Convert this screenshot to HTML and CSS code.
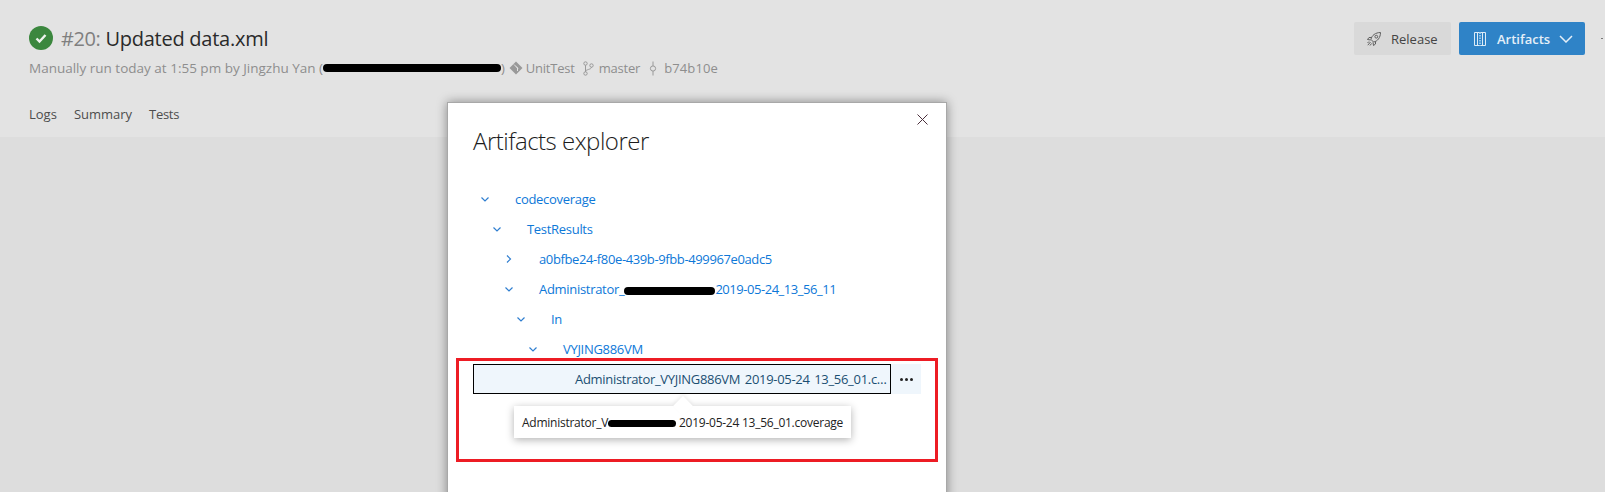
FILE: index.html
```html
<!DOCTYPE html>
<html lang="en">
<head>
<meta charset="utf-8">
<title>Artifacts explorer</title>
<link rel="stylesheet" href="styles.css">
</head>
<body>
<div class="page">
  <header class="top">
    <div class="head">
      <div class="summary">
        <div class="title-line">
          <svg class="status" viewBox="0 0 24 24" width="24" height="24"><circle cx="12" cy="12" r="12" fill="#3b873e"/><path d="M7.5 12.5l3 3 6-6.5" fill="none" stroke="#eef3ee" stroke-width="2.4"/></svg>
          <h1 class="title"><span class="run-no">#20:</span> Updated data.xml</h1>
        </div>
        <div class="meta">
          <span class="meta-by">Manually run today at 1:55 pm by Jingzhu Yan (</span><span class="redact redact-meta"></span><span class="meta-close">)</span>
          <svg class="meta-icon icon-git" viewBox="0 0 14 14" width="14" height="14"><path d="M7 .5L13.5 7 7 13.5.5 7z" fill="#999"/><path d="M5 3.5l3.5 3.5v3M7 5.5l2 2" fill="none" stroke="#e3e3e3" stroke-width="1"/></svg>
          <span>UnitTest</span>
          <svg class="meta-icon icon-branch" viewBox="0 0 11 15" width="11" height="15"><g fill="none" stroke="#999"><circle cx="2.5" cy="2.500" r="1.700"/><circle cx="2.500" cy="12.500" r="1.700"/><circle cx="8.500" cy="4.500" r="1.700"/><path d="M2.500 4.200v6.600M8.500 6.200c0 2.500-6 2-6 4.500"/></g></svg>
          <span>master</span>
          <svg class="meta-icon icon-commit" viewBox="0 0 10 15" width="10" height="15"><g fill="none" stroke="#999"><circle cx="5" cy="7.500" r="2.600"/><path d="M5 .5v4.400M5 10.100v4.400"/></g></svg>
          <span class="meta-hash">b74b10e</span>
        </div>
      </div>
      <div class="actions">
        <button class="btn btn-release">
          <svg viewBox="0 0 14 14" width="14" height="14"><g fill="none" stroke="#5f5f5f" stroke-width="1"><path d="M4 7.500C4.500 3.500 8.500.5 13.500.5c0 5-3 9-7 9.500z"/><circle cx="9.300" cy="4.700" r="1.400"/><path d="M4.300 5.500H2L.5 7.500l3.200.5M8.500 9.700V12l-2 1.500-.5-3.200M3.500 10L.8 13.200M2 9.500L.5 11M4.500 11.500L3 13.500"/></g></svg>
          <span>Release</span>
        </button>
        <button class="btn btn-artifacts">
          <svg viewBox="0 0 12 14" width="12" height="14"><g fill="none"><path d="M.5.5h11v13H.5z" stroke="#dcebf7"/><path d="M3.500.5v13M8.500.5v13" stroke="#dcebf7"/><path d="M6 .5v13" stroke="#8fc3ea" stroke-width="2" stroke-dasharray="1.500 1"/></g></svg>
          <span class="btn-label">Artifacts</span>
          <svg class="btn-caret" viewBox="0 0 14 8" width="14" height="8"><path d="M1 1l6 6 6-6" fill="none" stroke="#e4eff8" stroke-width="1.500"/></svg>
        </button>
        <span class="clipped-more"></span>
      </div>
    </div>
    <nav class="tabs"><a>Logs</a><a>Summary</a><a class="tab-tests">Tests</a></nav>
  </header>

  <section class="modal">
    <svg class="close" viewBox="0 0 11 11" width="11" height="11"><path d="M.5.5l10 10M10.500.5l-10 10" fill="none" stroke="#4b2f3c" stroke-width="1"/></svg>
    <h2 class="modal-title">Artifacts explorer</h2>
    <div class="tree">
      <div class="row depth-0"><svg class="chev" viewBox="0 0 8 5" width="8" height="5"><path d="M.5.5L4 4 7.500.5"/></svg><span>codecoverage</span></div>
      <div class="row depth-1"><svg class="chev" viewBox="0 0 8 5" width="8" height="5"><path d="M.5.5L4 4 7.500.5"/></svg><span>TestResults</span></div>
      <div class="row depth-2"><svg class="chev" viewBox="0 0 5 8" width="5" height="8"><path d="M.5.5L4 4 .5 7.500"/></svg><span class="digits">a0bfbe24-f80e-439b-9fbb-499967e0adc5</span></div>
      <div class="row depth-2"><svg class="chev" viewBox="0 0 8 5" width="8" height="5"><path d="M.5.5L4 4 7.500.5"/></svg><span>Administrator_<span class="redact redact-admin"></span><span class="stamp">2019-05-24_13_56_11</span></span></div>
      <div class="row depth-3"><svg class="chev" viewBox="0 0 8 5" width="8" height="5"><path d="M.5.5L4 4 7.500.5"/></svg><span>In</span></div>
      <div class="row depth-4"><svg class="chev" viewBox="0 0 8 5" width="8" height="5"><path d="M.5.5L4 4 7.500.5"/></svg><span>VYJING886VM</span></div>
      <div class="row-selected">
        <div class="sel-name">Administrator_VYJING886VM 2019-05-24 13_56_01.coverage</div>
        <div class="sel-more"><i></i><i></i><i></i></div>
      </div>
    </div>
  </section>

  <div class="tooltip">
    <span class="tooltip-beak"></span>
    <span class="tooltip-text">Administrator_V<span class="redact redact-tip"></span> 2019-05-24 13_56_01.coverage</span>
  </div>

  <div class="highlight"></div>
</div>
</body>
</html>
```

FILE: styles.css
```css
* { box-sizing: border-box; }
html, body { margin: 0; padding: 0; }
body { font-family: "Open Sans", "Noto Sans", sans-serif; background: #dddddd; }
.page { position: relative; width: 1605px; height: 492px; overflow: hidden; background: #dddddd; }

.top { height: 137px; background: #e3e3e3; padding: 22px 0 0 29px; }
.head { display: flex; justify-content: space-between; align-items: flex-start; }
.title-line { display: flex; align-items: center; height: 32px; }
.status { margin-right: 8px; }
.title { margin: 0; padding-top: 2px; font-size: 20px; font-weight: 400; color: #2a2a2a; letter-spacing: -0.25px; line-height: 32px; }
.run-no { color: #7f7f7f; letter-spacing: -0.4px; }
.meta { display: flex; align-items: center; height: 20px; margin-top: 4px; font-size: 13px; letter-spacing: -0.2px; color: #8e8e8e; white-space: nowrap; }
.meta-by { font-size: 13.5px; letter-spacing: 0; }
.meta-hash { letter-spacing: 0.1px; }
.meta-close { margin-right: 4px; }
.meta-icon { flex: none; }
.icon-git { margin-right: 3px; }
.icon-branch { margin-left: 8px; margin-right: 5px; }
.icon-commit { margin-left: 8px; margin-right: 6px; }
.redact { display: inline-block; background: #000; border-radius: 4px; }
.redact-meta { width: 178px; height: 8px; }

.actions { display: flex; align-items: center; }
.btn { display: flex; align-items: center; height: 33px; border: 0; border-radius: 2px; font-family: inherit; font-size: 13px; padding: 0; }
.btn-release { width: 97px; background: #d9d9d9; color: #444; padding-left: 13px; margin-right: 8px; }
.btn-release span { margin-left: 10px; }
.btn-artifacts { width: 126px; background: #2f83c7; color: #e4eff8; font-weight: 600; padding-left: 15px; }
.btn-label { margin-left: 11px; }
.btn-caret { margin-left: 9px; }
.clipped-more { display: block; width: 2px; height: 1px; margin-left: 16px; margin-right: 2px; background: #777; }

.tabs { display: flex; gap: 17px; margin-top: 26px; font-size: 13px; line-height: 20px; color: #4d4d4d; }
.tab-tests { letter-spacing: -0.3px; }

.modal { position: absolute; left: 447px; top: 102px; width: 500px; bottom: -10px; padding: 18px 25px 0; background: #fff; border: 1px solid #a8a8a8; box-shadow: 0 0 10px rgba(0,0,0,.4); }
.close { position: absolute; right: 18px; top: 11px; }
.modal-title { margin: 0; font-size: 24px; font-weight: 300; line-height: 40px; color: #1c1c1c; letter-spacing: -0.5px; }
.tree { margin-top: 23px; font-size: 13px; color: #0d78d8; }
.row { display: flex; align-items: center; height: 30px; white-space: nowrap; letter-spacing: -0.3px; }
.digits { letter-spacing: -0.38px; }
.stamp { letter-spacing: -0.46px; }
.chev { width: 24px; flex: none; margin-right: 18px; fill: none; stroke: #2f7ed0; stroke-width: 1.2; }
.depth-0 { padding-left: 0; }
.depth-1 { padding-left: 12px; }
.depth-2 { padding-left: 24px; }
.depth-3 { padding-left: 36px; }
.depth-4 { padding-left: 48px; }
.redact-admin { width: 91px; height: 8px; vertical-align: middle; }

.row-selected { display: flex; width: 448px; height: 30px; }
.sel-name { width: 418px; padding: 0 3px 0 101px; border: 1px solid #000; background: #eff6fc; color: #1b4f72; line-height: 28px; letter-spacing: -0.3px; word-spacing: 1.5px; white-space: nowrap; overflow: hidden; text-overflow: ellipsis; }
.sel-more { display: flex; align-items: center; justify-content: center; gap: 2px; width: 30px; background: #eff6fc; }
.sel-more i { width: 3px; height: 3px; border-radius: 50%; background: #222; }

.tooltip { position: absolute; left: 514px; top: 406px; width: 337px; height: 32px; padding: 1px 0 0 8px; display: flex; align-items: center; background: #fff; font-size: 12px; letter-spacing: -0.25px; color: #222; white-space: nowrap; box-shadow: 0 2px 8px rgba(0,0,0,.3); }
.tooltip-beak { position: absolute; left: 162px; top: -7px; width: 14px; height: 14px; background: #fff; transform: rotate(45deg); box-shadow: -2px -2px 4px rgba(0,0,0,.06); }
.tooltip-text { position: relative; }
.redact-tip { width: 68px; height: 7px; vertical-align: middle; }

.highlight { position: absolute; left: 456px; top: 358px; width: 482px; height: 104px; border: 3px solid #ed1c24; }
```
